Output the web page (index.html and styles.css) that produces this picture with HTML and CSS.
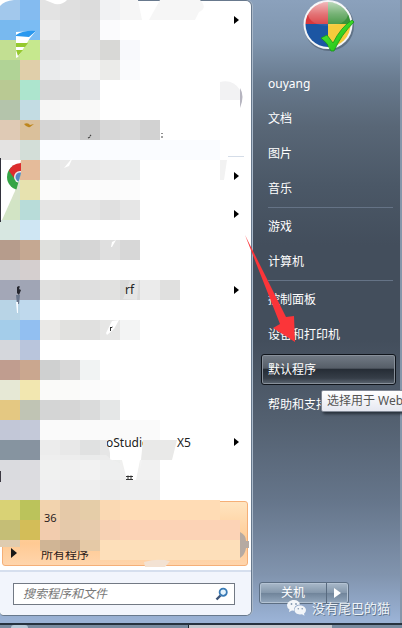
FILE: index.html
```html
<!DOCTYPE html>
<html lang="zh-CN">
<head>
<meta charset="utf-8">
<title>开始菜单</title>
<link rel="stylesheet" href="styles.css">
</head>
<body>
<div class="desktop">
  <main class="start-menu">
    <section class="programs">
      <ul class="program-list pinned">
        <li class="more"></li><li></li><li></li><li></li>
      </ul>
      <ul class="program-list recent">
        <li class="more"></li>
        <li class="more"></li>
        <li></li>
        <li class="more"><span class="name name-rf">rf</span></li>
        <li></li><li></li><li></li>
        <li class="more"><span class="name name-studio">oStudio</span><span class="version">X5</span></li>
        <li></li>
      </ul>
      <div class="highlight">
        <div class="current">36</div>
        <div class="all-programs">所有程序</div>
      </div>
      <div class="search-bar">
        <div class="search"><span>搜索程序和文件</span>
          <svg width="14" height="14" viewBox="0 0 14 14"><path d="M1.5 12.5 5.5 8.5" stroke="#3c5378" stroke-width="2.4"/><circle cx="8.2" cy="5.2" r="3.6" fill="#e4f3fd" stroke="#397ab5" stroke-width="1.8"/></svg>
        </div>
      </div>
      <svg class="mosaic" width="252" height="570" viewBox="0 0 252 570">
        <g id="tiles" shape-rendering="crispEdges"></g>
        <path d="M45 0h22q-4 5-12 4z" fill="#fff"/>
        <path d="M0 0h14Q4 1 0 6z" fill="#fff"/>
        <path d="M120 0h18l4 20h-22zM160 0h40q8 8-1 12l-4 8h-46z" fill="#f6f6f6"/>
        <path d="M16 40V32l20-1-6 7-12 19-2 1z" fill="#fff"/>
        <path d="M16 35q8-5 20-4l-7 6-13-1z" fill="#2998ef"/>
        <path d="M16 43h12l-3 4h-9zM16 50h7l-5 6z" fill="#96c92e"/>
        <path d="M24 124q4-2 6 1l4-1-4 3q-3 1-6-3z" fill="#bd861d"/>
        <path d="m88 138 2-1m0-1 1-1m70 2h2m-1-4v1" stroke="#444" stroke-width="1.2"/>
        <path d="M220 82q13-3 20 8v10h-20z" fill="#f2f2f3"/><path d="M240 88q5 8 0 20z" fill="#b6b5c0"/>
        <path d="M220 160h7l-3 20h-4z" fill="#f2f2f2"/>
        <path d="m64 168 9-11-4 9z" fill="#fff"/>
        <path d="M1 160h20l-6 31-13 29H1z" fill="#fff"/>
        <path d="M0 158h1v64H0z" fill="#32323c"/>
        <clipPath id="cut"><path d="M5 160h16v13l-5 18H5z"/></clipPath>
        <g clip-path="url(#cut)"><circle cx="20" cy="177" r="13" fill="#35a445"/><path d="M9 171q3-8 13-8v10l-8 5z" fill="#dd2c2d"/><circle cx="20" cy="177" r="6" fill="#eee"/><circle cx="20" cy="177" r="4.5" fill="#5688c3"/></g>
        <path d="m111 247 1-5 4-2-4 7z" fill="#fff"/>
        <path d="M17 287q4-3 2 2l2 1-2 5-2-2z" fill="#25262f"/><path d="M16 295h4l-1 9h-2z" fill="#69758b"/><path d="M16 302h2v11h-1z" fill="#f6fbff"/>
        <path d="m123 299 7-19h9l-2 20z" fill="#fff" opacity=".3"/>
        <path d="m106 333 6-12 7-1-5 9-7 6z" fill="#fff"/><path d="M110.500 327v4m0-3 2-1" stroke="#333" fill="none"/>
        <path d="M143 440h34l-5 20h-31z" fill="#e9e9e8"/>
        <path d="M100 440h7l3 13v7h-10z" fill="#e6e6e6"/>
        <path d="M40 455h66l6 5q10 1 14 13l11 7 5-20h18v40H40z" fill="#f0f0f0" opacity=".65"/>
        <path d="M122 460h18l-4 20h-9z" fill="#fff"/><path d="M126 476.500h7m-7 3h7m-5-4v4m3-4v4" stroke="#333"/>
        <path d="M0 471h1v11H0z" fill="#3b3842"/>
        <path d="M240 532q6 3 6 9h3v7h-3q-1 7-6 10z" fill="#b6aaa2"/>
        <path d="M144 562q14-4 26-1l-5 6h-20z" fill="#f3e2d3"/>
      </svg>
    </section>
    <nav class="places">
      <svg class="avatar" width="56" height="56" viewBox="0 0 56 56">
        <defs><linearGradient id="shine" x2="0" y2="1"><stop stop-color="#fff" stop-opacity=".65"/><stop offset=".5" stop-color="#fff" stop-opacity=".3"/><stop offset="1" stop-color="#fff" stop-opacity="0.05"/></linearGradient>
        <linearGradient id="tick" x2="1" y2="1"><stop stop-color="#55ee35"/><stop offset="1" stop-color="#18b913"/></linearGradient></defs>
        <circle cx="27" cy="26" r="25" fill="#465365" opacity=".55"/>
        <circle cx="26" cy="24.5" r="24.5" fill="#f3f5f7"/>
        <path d="M26 24V2A22.500 22.500 0 0 0 3.500 24z" fill="#d8383c"/>
        <path d="M26 24V2A22.500 22.500 0 0 1 48.500 24z" fill="#3b913a"/>
        <path d="M26 24v23A22.500 22.500 0 0 1 3.500 24z" fill="#1c56a3"/>
        <path d="M26 24v23A22.500 22.500 0 0 0 48.500 24z" fill="#f6cb3c"/>
        <ellipse cx="26" cy="14" rx="20" ry="12" fill="url(#shine)"/>
        <path d="m19 38 6-3 6 8Q39 27 50 20l2 2Q39 35 32 51h-3q-3-8-10-13z" fill="url(#tick)" stroke="#169519" stroke-width=".8"/>
      </svg>
      <ul>
        <li class="user">ouyang</li>
        <li>文档</li>
        <li>图片</li>
        <li>音乐</li>
        <li class="divided">游戏</li>
        <li>计算机</li>
        <li class="divided">控制面板</li>
        <li>设备和打印机</li>
        <li class="selected">默认程序</li>
        <li>帮助和支持</li>
      </ul>
      <div class="shutdown"><span>关机</span><i></i></div>
    </nav>
  </main>
  <footer class="taskbar"><div class="orb"></div><div class="task"></div></footer>
  <svg class="pointer" width="54" height="108" viewBox="0 0 54 108"><path d="M0 0 41 82l8-1 1 26-22-14 7-4z" fill="#fb3539"/></svg>
  <div class="tooltip">选择用于 Web</div>
  <div class="watermark">
    <svg width="19" height="16" viewBox="0 0 19 16"><path fill="#f3f6f9" d="M7 0C3 0 0 2.500 0 5.500q0 2.500 2.500 4L2 12l3-1.500 2 .2Q6.500 5 13 4.500 12 0 7 0z"/><path fill="#f3f6f9" d="M13 5.500c-3 0-5.500 2-5.500 4.600S10 14.500 13 14.500l2-.2 2.500 1.400-.5-2q2-1.300 2-3.600c0-2.600-3-4.600-6-4.600z"/><g fill="#8498b0"><circle cx="4.500" cy="4" r=".9"/><circle cx="9" cy="4" r=".9"/><circle cx="11.300" cy="8.700" r=".8"/><circle cx="15.200" cy="8.700" r=".8"/></g></svg>
    <span>没有尾巴的猫</span>
  </div>
</div>
<script src="mosaic.js"></script>
</body>
</html>
```
FILE: styles.css
```css
* { box-sizing: border-box; }
body { margin: 0; overflow: hidden; font: 12px/18px "Noto Sans", "Noto Sans CJK SC", sans-serif; }
ul { list-style: none; margin: 0; padding: 0; }
.desktop { position: relative; width: 402px; height: 628px; overflow: hidden; display: flex; flex-direction: column; background: #9ab3d4; }
.start-menu { height: 623px; display: grid; grid-template-columns: 252px 150px; background: linear-gradient(#8ba1bc 0, #8096af 40px, #687a8e 82px, #596777 125px, #4b5867 185px, #434e5c 245px, #434e5c 340px, #536070 420px, #65758a 500px, #8194ae 575px, #9ab2d5 620px); }
.programs { position: relative; height: 616px; display: flex; flex-direction: column; background: #fff; border: 1px solid #68798d; border-left: 0; border-radius: 4px 6px 6px 4px; box-shadow: 1px 0 #a9b8c9; }
.program-list li { position: relative; height: 38px; display: flex; align-items: center; color: #222; }
.pinned { height: 156px; }
.recent { height: 344px; }
.pinned::after { content: ""; display: block; width: 16px; height: 1px; margin: 3px 0 0 228px; background: #d5dde8; }
.more::after { content: ""; margin: 0 12px 0 auto; border-left: 5px solid #000; border-top: 4px solid transparent; border-bottom: 4px solid transparent; }
.name { position: relative; z-index: 1; }
.name-rf { margin-left: 125px; }
.name-studio { margin: 2px 0 0 106px; width: 37px; clip-path: inset(0 0 0 1px); }
.version { margin: 2px 0 0 34px; }
.highlight { height: 65px; margin: 0 3px 0 2px; border: 1px solid #f5af77; border-radius: 3px; background: linear-gradient(#ffe4c0, #ffca93 65%, #ffd5ac); color: #2a211d; }
.current { height: 34px; padding: 7px 0 0 41px; font-size: 11px; position: relative; z-index: 1; clip-path: inset(12px 0 12px 0); }
.all-programs { height: 29px; display: flex; align-items: center; padding-top: 8px; line-height: 14px; }
.all-programs::before { content: ""; margin: -4px 24px 0 8px; border-left: 6px solid #171717; border-top: 5px solid transparent; border-bottom: 5px solid transparent; }
.search-bar { margin-top: 4px; flex: 1; padding: 11px 16px 0 13px; border-top: 2px solid #d6dfee; background: #f2f5fc; border-radius: 0 0 5px 5px; }
.search { height: 22px; padding: 0 5px 0 9px; display: flex; align-items: center; justify-content: space-between; border: 1px solid #727984; background: #fff; color: #777; font-style: italic; }
.mosaic { position: absolute; left: 0; top: -1px; }
.places { position: relative; padding: 0 6px 0 9px; border-right: 2px solid #8596aa; display: flex; flex-direction: column; color: #fff; }
.avatar { margin: 0 0 10px 41px; flex: none; }
.places ul { width: 135px; display: flex; flex-direction: column; gap: 4px; }
.places li { height: 31px; padding: 0 7px; display: flex; align-items: center; }
.places .user { height: 35px; margin-bottom: -2px; }
.places .divided { position: relative; margin-top: 3px; }
.places .divided::before { content: ""; position: absolute; left: 7px; right: 3px; top: -4px; height: 1px; background: #657386; }
.places .selected { border: 1px solid #10151c; border-radius: 3px; padding: 0 6px; background: linear-gradient(#727b86, #565e68 45%, #262d36 50%, #363e48 80%, #5e6874); box-shadow: inset 0 0 0 1px #88909a; }
.shutdown { width: 90px; height: 22px; margin-top: auto; margin-bottom: 19px; margin-left: -2px; display: flex; border: 1px solid #5c6e83; border-radius: 3px; box-shadow: inset 0 0 0 1px #b4c3d3; background: linear-gradient(#a9b9ca, #8497ab 50%, #71859b 52%, #93a7bd); }
.shutdown span { width: 67px; text-align: center; border-right: 1px solid #596b80; line-height: 20px; }
.shutdown i { margin: 5px 0 0 7px; width: 7px; height: 10px; background: #fff; clip-path: polygon(0 0, 100% 50%, 0 100%); }
.taskbar { height: 5px; border-top: 2px solid #26323f; background: #788b9f; display: flex; }
.orb { width: 17px; margin-left: 11px; background: #b8cad8; border-radius: 9px 9px 0 0; }
.task { margin-left: 160px; width: 144px; border-left: 1px solid #1b242e; background: #c3c8ce; }
.pointer { position: absolute; left: 245px; top: 235px; }
.tooltip { position: absolute; left: 321px; top: 390px; width: 90px; height: 22px; padding-left: 5px; line-height: 19px; white-space: nowrap; border: 1px solid #818895; border-radius: 2px; background: linear-gradient(#fff, #e6e8f1); box-shadow: 2px 2px 3px #28313b; color: #555; }
.watermark { position: absolute; left: 287px; top: 599px; display: flex; align-items: center; gap: 6px; color: #eef3f8; font-size: 13px; text-shadow: 1px 1px #62778e; white-space: nowrap; }
```
FILE: mosaic.js
```js
// Privacy mosaic: 20px tiles, one row per line, "-" leaves a tile clear.
const rows = `a2c8ec 84bbf0 e3e3e3 dfdfdf dcdcdc f1f2f3
78b9ef 7bbcf3 ebebeb e1e1e1 dfdfdf fbfbfd
c2df92 c6e88e e0e0e0 e3e3e3 e3e3e3 d8d8d6 f8f9fc
b1d396 e0cfaa eaebec eeeff0 f5f5f5 ebebe9 fafbfd
b9c993 ade5ce d8d8d8 d8d8d8 e2e4e7
b4c4ab c3dce3 f6f6f5 f8f8f7 f9f9f8
dfcab5 dac09b d5d5d5 d8d8d8 c9c9c9 d7d7d7 dadada d2d2d2
e4e3e2 d3ded8 fafcff fafcff fafcff fafcff fafcff fafcff fafcff fafcff fafcff
e3e2da e5bb9a e5e5e4 e9e9e9 e9e9e9 ebebeb ebeded
d8e3ca e7e2af fbfbfa f9f9f9 fcfcfc fbfbfb fcfcfc
d2e4c5 b8dcd9 e5e5e4 e5e5e5 e5e5e5 e0e0e0 e6e6e6
d7e7e1 cfe6f3
b69c8c c5a892 dfe0dd d2d4d4 d6d6d6 dfdfdf d7d7d7
d0cfd1 d5cfcf
a3a7b7 a0a5b5 e0e0df dddddc dfdfdf e1e1e0 dadada ebebeb e0e0df
b8d4e6 bfd9ed
a4cdea 92bff1 eae9e7 e1e1df e0e0df e6e6e5 f3f4f4
d5d7dc b9c5dc
c09d8f caa78f cfd0d0 d8d8d8 f1f3f3
e6e8d5 f2e7b0 fafaf9 fafaf9 fbfbfb fcfcfc
e4c882 c0c4b4 d4d5d5 d6d6d6 dadbdb e5e7e7
c2c7d7 c4c9d9 fafafa fafafa fafafa fafafa fafafa fafafa
8694a0 8793a0 ececec e8e8e8 e0e1e1
dadbdf dcdce0 f1f2f1 f1f1f1 f7f7f7 eceeed f0f0ef f3f3f3
dcdce0 dcdcdf eeeeef ececec ebebeb e6e6e6 ececec ececec
d9d275 bbc35b f2d3ae e5c9a8 e5cda8 fad9b3 ffdcb5 ffdcb5 ffdcb5 ffdcb5 ffdcb5
c5be76 d3bd58 f2ccae e5c9aa e7cbac f7d2b4 fcd3b6 fcd3b6 fcd3b6 fcd3b6 fcd3b6 fcd3b6
dfccb0 - d0b595 c9ad90 e5c9a6 fddfba fddfba fddfba fddfba fddfba fddfba fddfba`.split("\n");
const tiles = document.getElementById("tiles");
rows.forEach((row, y) => row.split(" ").forEach((color, x) => {
  if (color === "-") return;
  const r = document.createElementNS("http://www.w3.org/2000/svg", "rect");
  r.setAttribute("x", x * 20);
  r.setAttribute("y", y * 20);
  r.setAttribute("width", 20);
  r.setAttribute("height", y === 27 ? (x === 0 ? 7 : x < 5 ? 11 : 20) : 20);
  r.setAttribute("fill", "#" + color);
  tiles.appendChild(r);
}));
```
